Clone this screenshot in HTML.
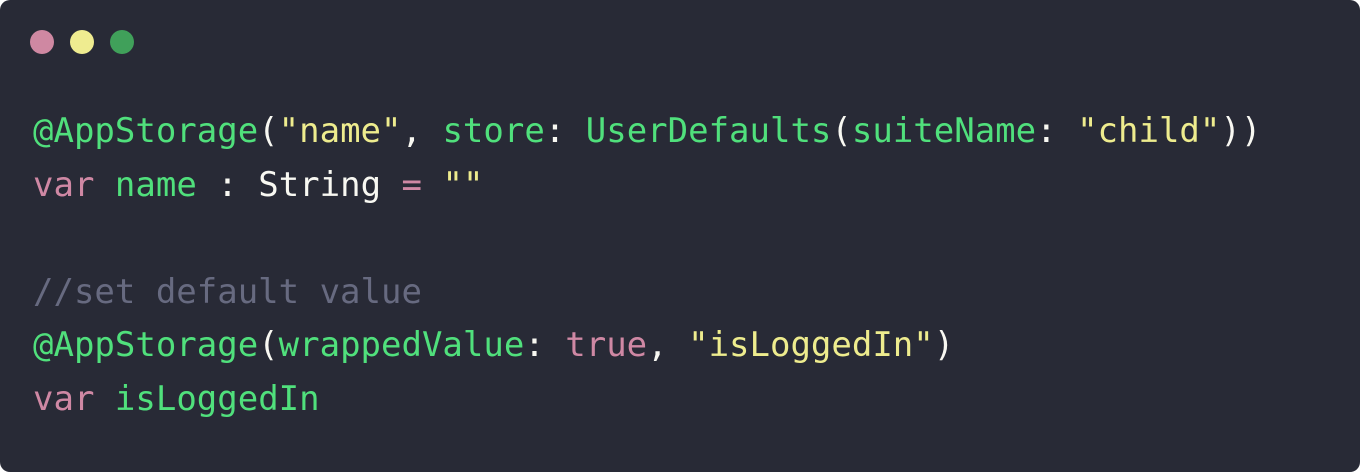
<!DOCTYPE html>
<html><head><meta charset="utf-8"><style>
html,body{margin:0;padding:0;background:#fff;width:1360px;height:472px;overflow:hidden}
.card{position:absolute;left:0;top:0;width:1360px;height:472px;background:#282a36;border-radius:10px}
.dot{position:absolute;top:30px;width:24px;height:24px;border-radius:50%}
pre{position:absolute;left:33px;top:105px;margin:0;font-family:"DejaVu Sans Mono","Liberation Mono",monospace;font-size:34px;line-height:53.5px;color:#f8f8f2}
.g{color:#50e07c}.p{color:#cf88a4}.y{color:#eeec8e}.c{color:#676a80}.w{color:#f8f8f2}
</style></head><body>
<div class="card">
<div class="dot" style="left:30px;background:#cf88a2"></div>
<div class="dot" style="left:70px;background:#efec90"></div>
<div class="dot" style="left:110px;background:#40a05a"></div>
<pre><span class="g">@AppStorage</span><span class="w">(</span><span class="y">"name"</span><span class="w">, </span><span class="g">store</span><span class="w">: </span><span class="g">UserDefaults</span><span class="w">(</span><span class="g">suiteName</span><span class="w">: </span><span class="y">"child"</span><span class="w">))</span>
<span class="p">var</span> <span class="g">name</span> <span class="w">: String</span> <span class="p">=</span> <span class="y">""</span>

<span class="c">//set default value</span>
<span class="g">@AppStorage</span><span class="w">(</span><span class="g">wrappedValue</span><span class="w">: </span><span class="p">true</span><span class="w">, </span><span class="y">"isLoggedIn"</span><span class="w">)</span>
<span class="p">var</span> <span class="g">isLoggedIn</span></pre>
</div>
</body></html>
